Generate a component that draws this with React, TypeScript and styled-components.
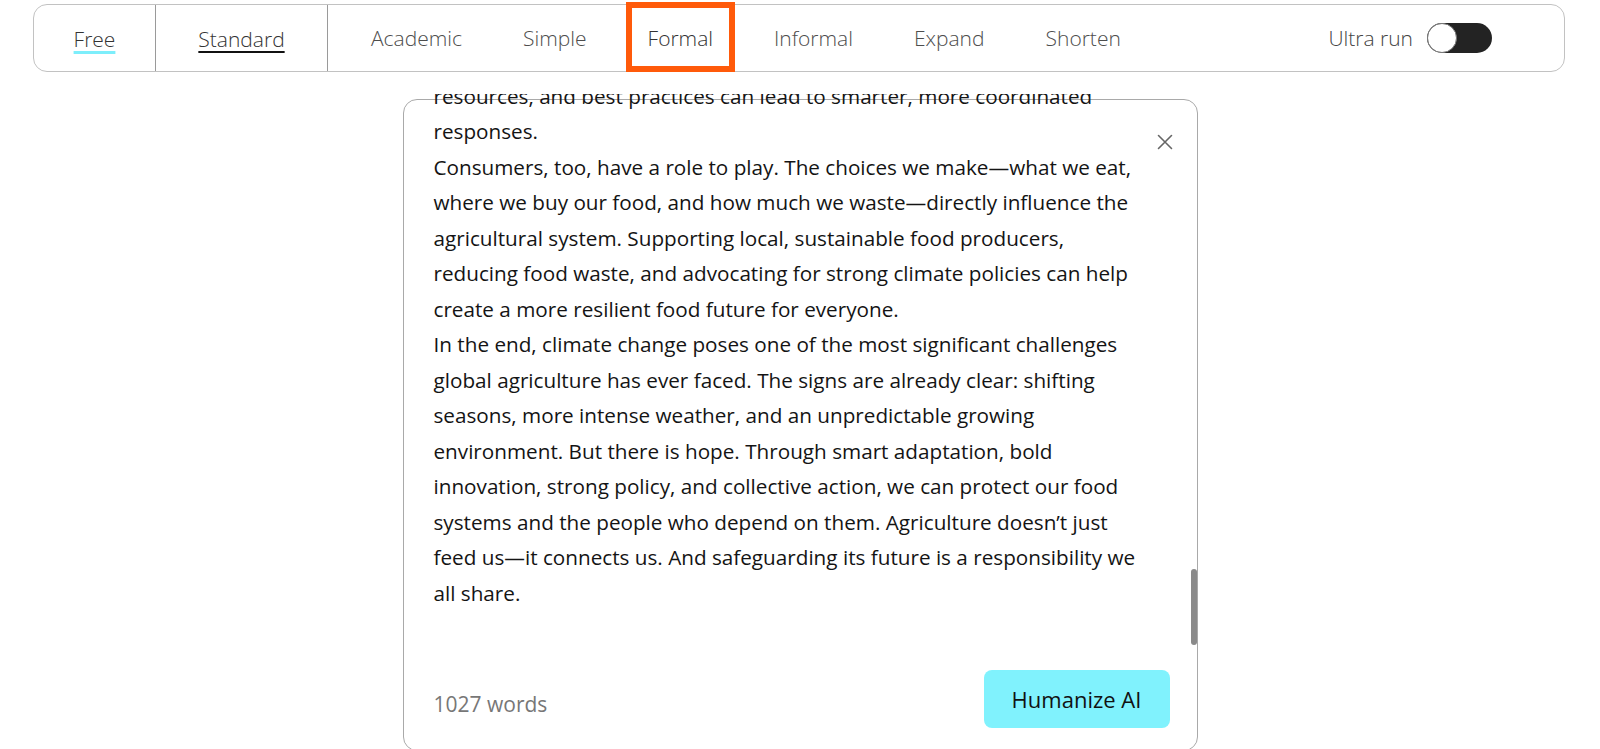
import React from "react";
import styled, { createGlobalStyle } from "styled-components";

const Global = createGlobalStyle`
  html, body { margin: 0; padding: 0; background: #fff; }
  body { font-family: "Open Sans", "Noto Sans", sans-serif; color: #111; }
  * { box-sizing: border-box; }
`;

const Page = styled.div`
  display: flex;
  flex-direction: column;
  align-items: center;
  padding-top: 4px;
  height: 749px;
  overflow: hidden;
`;

const Toolbar = styled.div`
  align-self: flex-start;
  flex-shrink: 0;
  margin-left: 33px;
  width: 1532px;
  height: 68px;
  border: 1px solid #c2c2c2;
  border-radius: 14px;
  display: flex;
  align-items: stretch;
  font-size: 21px;
  font-weight: 300;
  color: #444;
`;

const Cell = styled.div<{ $w: number; $divider?: boolean }>`
  width: ${(p) => p.$w}px;
  display: flex;
  align-items: center;
  justify-content: center;
  padding-top: 2px;
  border-right: ${(p) => (p.$divider ? "1px solid #9a9a9a" : "none")};
`;

const Underlined = styled.span<{ $color: string; $thick: number }>`
  color: #333;
  text-decoration: underline;
  text-decoration-color: ${(p) => p.$color};
  text-decoration-thickness: ${(p) => p.$thick}px;
  text-underline-offset: 4px;
`;

const Tabs = styled.div`
  display: flex;
  align-items: stretch;
  gap: 17px;
  padding-left: 21px;
  flex: 1;
`;

const Tab = styled.div<{ $active?: boolean }>`
  display: flex;
  align-items: center;
  padding: 2px 16px 0;
  margin: -3px 0 -1px;
  border: 6px solid ${(p) => (p.$active ? "#ff5a0a" : "transparent")};
  color: ${(p) => (p.$active ? "#333" : "#4d4d4d")};
`;

const Ultra = styled.div`
  display: flex;
  align-items: center;
  gap: 14px;
  padding-right: 72px;
  color: #444;
`;

const Switch = styled.div`
  width: 65px;
  height: 30px;
  border-radius: 15px;
  background: #232323;
  position: relative;
`;

const Knob = styled.div`
  position: absolute;
  left: 0;
  top: 0;
  width: 30px;
  height: 30px;
  border-radius: 50%;
  background: #fff;
  border: 1px solid #777;
`;

const Card = styled.div`
  margin-top: 27px;
  width: 795px;
  height: 652px;
  flex-shrink: 0;
  border: 1px solid #a9a9a9;
  border-radius: 14px;
  position: relative;
  display: flex;
  flex-direction: column;
`;

const TextScroll = styled.div`
  margin-top: -6px;
  height: 517px;
  overflow: hidden;
  display: flex;
  flex-direction: column;
  justify-content: flex-end;
  padding-left: 30px;
`;

const Text = styled.div`
  width: 716px;
  font-size: 20.7px;
  line-height: 35.5px;
  color: #141414;
`;

const Para = styled.p`
  margin: 0;
`;

const Close = styled.button`
  position: absolute;
  top: 32px;
  right: 22px;
  width: 20px;
  height: 20px;
  padding: 0;
  border: none;
  background: transparent;
  display: flex;
  align-items: center;
  justify-content: center;
  cursor: pointer;
`;

const Thumb = styled.div`
  position: absolute;
  right: 0;
  top: 469px;
  width: 6px;
  height: 76px;
  border-radius: 3px;
  background: #8a8a8a;
`;

const Footer = styled.div`
  margin-top: auto;
  display: flex;
  align-items: center;
  justify-content: space-between;
  padding: 0 27px 22px 30px;
`;

const Count = styled.div`
  font-size: 21px;
  color: #777;
  margin-top: 10px;
`;

const Humanize = styled.button`
  width: 186px;
  height: 58px;
  border: none;
  border-radius: 8px;
  background: #80f2fd;
  font-family: "Open Sans", "Noto Sans", sans-serif;
  font-size: 22px;
  color: #111;
  cursor: pointer;
`;

const tabs = ["Academic", "Simple", "Formal", "Informal", "Expand", "Shorten"];

export default function App() {
  return (
    <>
      <Global />
      <Page>
        <Toolbar>
          <Cell $w={122} $divider>
            <Underlined $color="#7deefb" $thick={3}>Free</Underlined>
          </Cell>
          <Cell $w={172} $divider>
            <Underlined $color="#111" $thick={2}>Standard</Underlined>
          </Cell>
          <Tabs>
            {tabs.map((t) => (
              <Tab key={t} $active={t === "Formal"}>
                {t}
              </Tab>
            ))}
          </Tabs>
          <Ultra>
            Ultra run
            <Switch>
              <Knob />
            </Switch>
          </Ultra>
        </Toolbar>
        <Card>
          <TextScroll>
            <Text>
              <Para>
                Climate change is no longer a distant threat for farmers around the world. Rising temperatures, erratic rainfall,
                and more frequent extreme weather events are already reshaping how and where food can be grown.
              </Para>
              <Para>
                International cooperation matters as well. Sharing data, technology, financial
                <br />
                resources, and best practices can lead to smarter, more coordinated responses.
              </Para>
              <Para>
                Consumers, too, have a role to play. The choices we make—what we eat, where we buy our food, and how much we
                waste—directly influence the agricultural system. Supporting local, sustainable food producers, reducing food
                waste, and advocating for strong climate policies can help create a more resilient food future for everyone.
              </Para>
              <Para>
                In the end, climate change poses one of the most significant challenges global agriculture has ever faced. The
                signs are already clear: shifting seasons, more intense weather, and an unpredictable growing environment. But
                there is hope. Through smart adaptation, bold innovation, strong policy, and collective action, we can protect
                our food systems and the people who depend on them. Agriculture doesn’t just feed us—it connects us. And
                safeguarding its future is a responsibility we all share.
              </Para>
            </Text>
          </TextScroll>
          <Close aria-label="Close">
            <svg width="16" height="16" viewBox="0 0 16 16">
              <path d="M1.5 1.5 L14.5 14.5 M14.5 1.5 L1.5 14.5" stroke="#666" strokeWidth="1.6" strokeLinecap="round" />
            </svg>
          </Close>
          <Thumb />
          <Footer>
            <Count>1027 words</Count>
            <Humanize>Humanize AI</Humanize>
          </Footer>
        </Card>
      </Page>
    </>
  );
}
